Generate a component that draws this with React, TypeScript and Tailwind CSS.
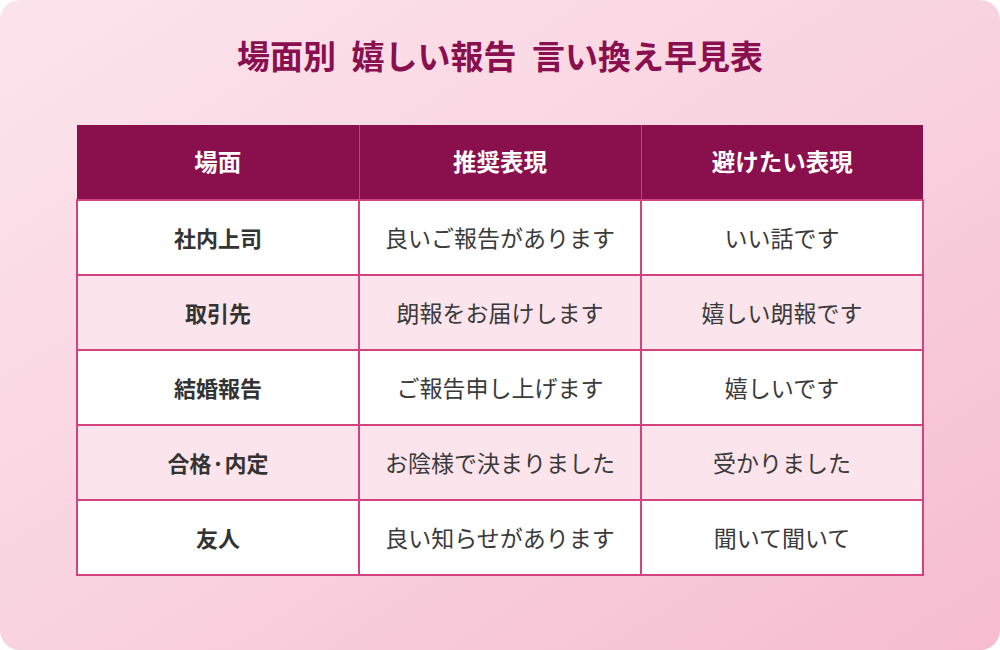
import React from "react";

const rows = [
  ["社内上司", "良いご報告があります", "いい話です"],
  ["取引先", "朗報をお届けします", "嬉しい朗報です"],
  ["結婚報告", "ご報告申し上げます", "嬉しいです"],
  ["合格·内定", "お陰様で決まりました", "受かりました"],
  ["友人", "良い知らせがあります", "聞いて聞いて"],
];

const App = () => {
  return (
    <div className="w-[1000px] h-[650px] bg-white">
      <div
        className="w-full h-full rounded-[20px] bg-gradient-to-br from-[#fce4ec] via-[#f9d3e0] to-[#f6bcd0] flex flex-col items-center"
        style={{ fontFamily: '"Noto Sans CJK JP", "Noto Sans", sans-serif' }}
      >
        <h1 className="mt-[33px] text-[33px] leading-[44px] font-bold text-[#8a0f4e] [word-spacing:8px]">
          場面別 嬉しい報告 言い換え早見表
        </h1>
        {/* table */}
        <table className="mt-[48px] w-[846px] border-collapse table-fixed">
          <thead>
            <tr className="bg-[#8a0f4d] h-[75px]">
              <th className="w-[282px] text-white text-[23.5px] font-bold border-r border-[#b04a7e]">場面</th>
              <th className="w-[282px] text-white text-[23.5px] font-bold border-r border-[#b04a7e]">推奨表現</th>
              <th className="w-[282px] text-white text-[23.5px] font-bold">避けたい表現</th>
            </tr>
          </thead>
          <tbody>
            {rows.map((r, i) => (
              <tr key={i} className={`h-[75px] ${i % 2 === 0 ? "bg-white" : "bg-[#fce4ec]"}`}>
                <td className="border-2 border-[#d4417f] text-center text-[22px] font-bold text-[#333]">{r[0]}</td>
                <td className="border-2 border-[#d4417f] text-center text-[23px] text-[#3a3a3a]">{r[1]}</td>
                <td className="border-2 border-[#d4417f] text-center text-[23px] text-[#3a3a3a]">{r[2]}</td>
              </tr>
            ))}
          </tbody>
        </table>
      </div>
    </div>
  );
};

export default App;
